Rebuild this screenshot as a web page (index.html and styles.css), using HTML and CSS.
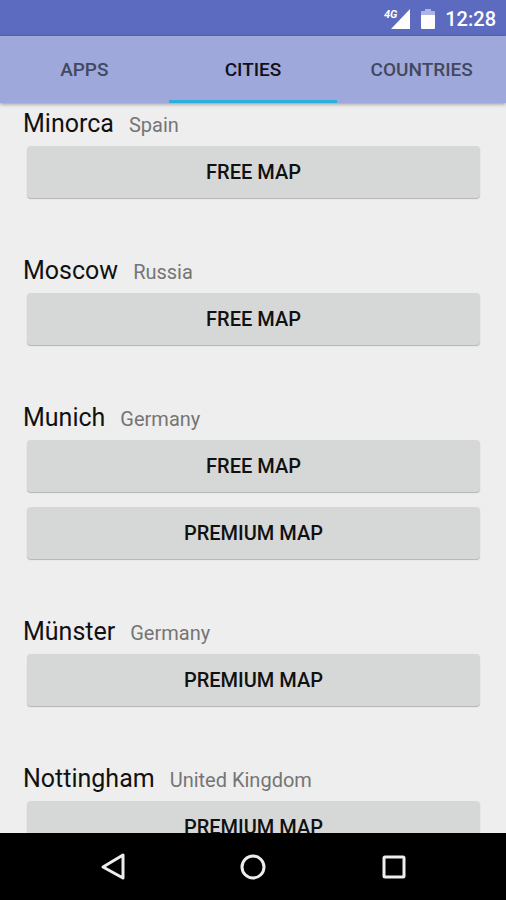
FILE: index.html
```html
<!DOCTYPE html>
<html lang="en">
<head>
<meta charset="utf-8">
<meta name="viewport" content="width=device-width, initial-scale=1">
<title>Cities</title>
<link rel="stylesheet" href="styles.css">
</head>
<body>
<header class="status">
  <svg class="signal" viewBox="0 0 28 24" role="img" aria-label="Mobile signal">
    <path d="M26 2v20H7z" fill="#fff"/>
    <text class="network" x="0" y="11">4G</text>
  </svg>
  <svg class="battery" viewBox="0 0 14 22" role="img" aria-label="Battery">
    <path d="M4 1h6v2h3a1 1 0 0 1 1 1v3H0V4a1 1 0 0 1 1-1h3z" fill="#fff" opacity=".5"/>
    <path d="M0 7h14v13a1 1 0 0 1-1 1H1a1 1 0 0 1-1-1z" fill="#fff"/>
  </svg>
  <time class="clock">12:28</time>
</header>
<nav class="tabs">
  <a class="tab" href="#apps">APPS</a>
  <a class="tab active" href="#cities" aria-current="page">CITIES</a>
  <a class="tab" href="#countries">COUNTRIES</a>
</nav>
<main class="list" id="cities">
  <section class="city">
    <h2 class="name">Minorca <span class="country">Spain</span></h2>
    <div class="maps"><button class="map">FREE MAP</button></div>
  </section>
  <section class="city">
    <h2 class="name">Moscow <span class="country">Russia</span></h2>
    <div class="maps"><button class="map">FREE MAP</button></div>
  </section>
  <section class="city">
    <h2 class="name">Munich <span class="country">Germany</span></h2>
    <div class="maps"><button class="map">FREE MAP</button><button class="map">PREMIUM MAP</button></div>
  </section>
  <section class="city">
    <h2 class="name">Münster <span class="country">Germany</span></h2>
    <div class="maps"><button class="map">PREMIUM MAP</button></div>
  </section>
  <section class="city">
    <h2 class="name">Nottingham <span class="country">United Kingdom</span></h2>
    <div class="maps"><button class="map">PREMIUM MAP</button></div>
  </section>
</main>
<footer class="navbar">
  <button class="key" aria-label="Back">
    <svg class="glyph" viewBox="0 0 32 32"><path d="M26 4v23L6 16z"/></svg>
  </button>
  <button class="key" aria-label="Home">
    <svg class="glyph" viewBox="0 0 32 32"><circle cx="16" cy="16" r="11"/></svg>
  </button>
  <button class="key" aria-label="Recent apps">
    <svg class="glyph" viewBox="0 0 32 32"><rect x="7" y="6" width="20" height="20" rx="1"/></svg>
  </button>
</footer>
</body>
</html>
```
FILE: styles.css
```css
* {
  box-sizing: border-box;
}

body {
  margin: 0;
  height: 100vh;
  display: flex;
  flex-direction: column;
  background: #eee;
  color: #111;
  font-family: Roboto, "Liberation Sans", sans-serif;
}

.status {
  flex: none;
  display: flex;
  align-items: center;
  justify-content: flex-end;
  height: 36px;
  padding: 2px 10px 0 0;
  background: #5c6bc0;
  color: #fff;
}

.signal {
  width: 28px;
  height: 24px;
}

.network {
  fill: #fff;
  stroke: #5c6bc0;
  stroke-width: 2px;
  paint-order: stroke;
  font-size: 11px;
  font-style: italic;
  font-weight: 700;
}

.battery {
  width: 14px;
  height: 22px;
  margin: 0 10px 0 9px;
}

.clock {
  font-size: 20px;
  font-weight: 500;
  line-height: 24px;
}

.tabs {
  flex: none;
  position: relative;
  display: grid;
  grid-template-columns: repeat(3, 1fr);
  height: 67px;
  background: #9fa8da;
  box-shadow: 0 1px 4px rgba(0, 0, 0, 0.4);
}

.tab {
  display: flex;
  align-items: center;
  justify-content: center;
  border-top: 3px solid transparent;
  border-bottom: 3px solid transparent;
  color: #434860;
  font-size: 19px;
  font-weight: 500;
  text-decoration: none;
}

.active {
  border-bottom-color: #29b0dc;
  color: #10111a;
}

.list {
  flex: 1;
  min-height: 0;
  overflow: hidden;
  padding: 7px 26px 0;
}

.city {
  margin-bottom: 59px;
}

.name {
  display: flex;
  align-items: baseline;
  gap: 15px;
  margin: 0 -4px 0 -3px;
  padding-bottom: 9px;
  font-size: 25px;
  font-weight: 400;
  line-height: 27px;
}

.country {
  color: #757575;
  font-size: 20px;
  line-height: 24px;
}

.maps {
  display: grid;
  gap: 15px;
  padding-left: 1px;
}

.map {
  height: 52px;
  padding: 0;
  border: 0;
  border-radius: 4px;
  background: #d6d8d7;
  box-shadow: 0 1px 1px rgba(0, 0, 0, 0.25);
  color: #111;
  font-family: inherit;
  font-size: 20px;
  font-weight: 500;
}

.navbar {
  flex: none;
  display: flex;
  justify-content: center;
  gap: 40px;
  height: 67px;
  background: #000;
}

.key {
  display: flex;
  align-items: center;
  justify-content: center;
  width: 100px;
  padding: 0;
  border: 0;
  background: none;
}

.glyph {
  width: 32px;
  height: 32px;
  fill: none;
  stroke: #eee;
  stroke-width: 3px;
  stroke-linejoin: round;
}
```
